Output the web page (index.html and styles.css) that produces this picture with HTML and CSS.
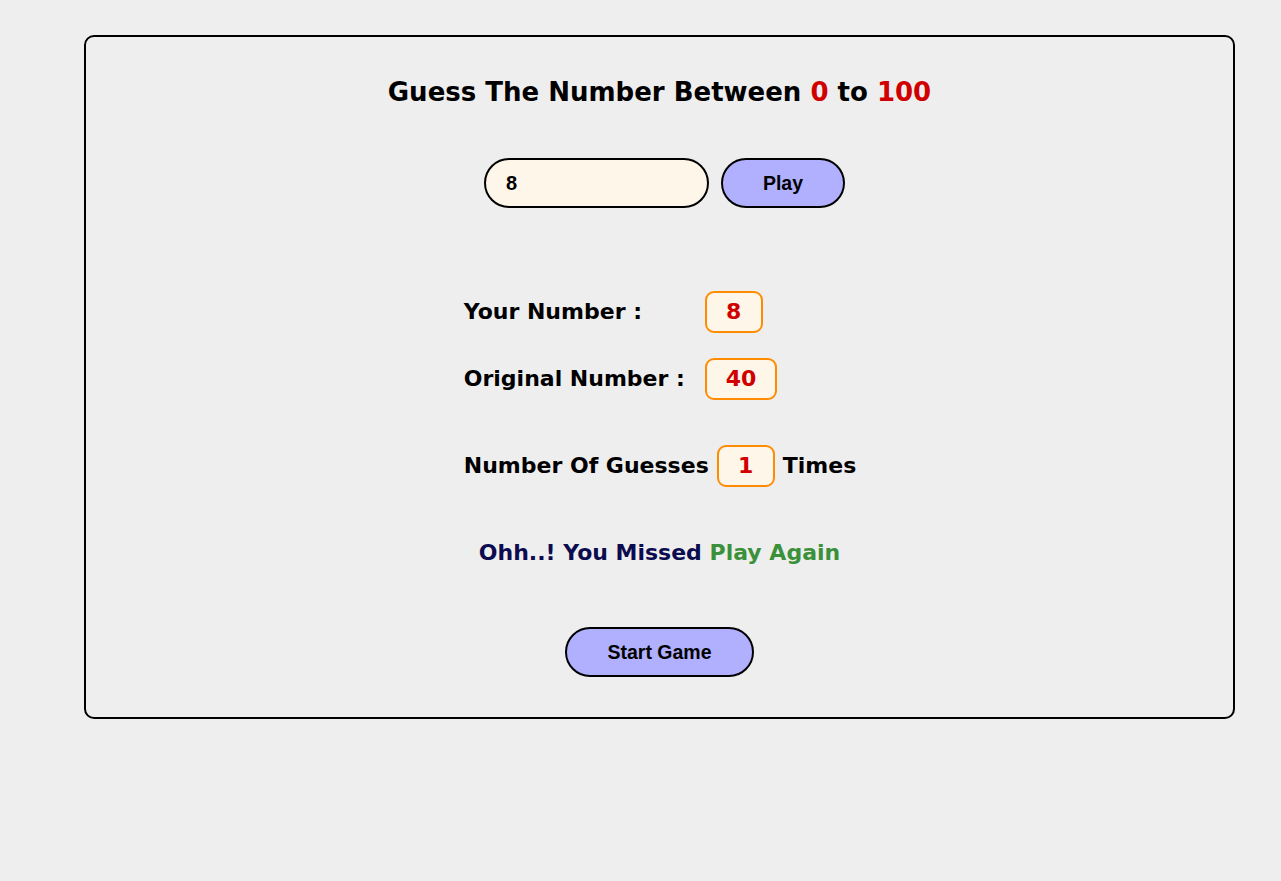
FILE: index.html
```html
<!DOCTYPE html>
<html lang="en">
<head>
<meta charset="utf-8">
<title>Guess The Number</title>
<link rel="stylesheet" href="styles.css">
</head>
<body>
<div class="card">
  <h1 class="title">Guess The Number Between <span class="red">0</span> to <span class="red">100</span></h1>
  <div class="form">
    <input class="guess" type="text" value="8">
    <button class="btn play">Play</button>
  </div>
  <div class="stats">
    <div class="row first">
      <span class="label">Your Number :</span>
      <span class="box">8</span>
    </div>
    <div class="row second">
      <span class="label">Original Number :</span>
      <span class="box">40</span>
    </div>
    <div class="row third">
      <span>Number Of Guesses</span>
      <span class="box">1</span>
      <span>Times</span>
    </div>
  </div>
  <p class="message"><span class="navy">Ohh..! You Missed</span> <span class="green">Play Again</span></p>
  <button class="btn start">Start Game</button>
</div>
</body>
</html>
```
FILE: styles.css
```css
html, body {
  margin: 0;
  padding: 0;
  background: #eeeeee;
}
body {
  padding: 35px 0 0 84px;
  font-family: "DejaVu Sans", Verdana, sans-serif;
  font-weight: bold;
  color: #000;
}
.card {
  box-sizing: border-box;
  width: 1151px;
  height: 684px;
  border: 2px solid #000;
  border-radius: 10px;
  display: flex;
  flex-direction: column;
  align-items: center;
  padding-top: 40px;
}
.title {
  margin: 0;
  font-size: 26px;
  line-height: 30px;
  font-weight: bold;
}
.red { color: #d10000; }
.form {
  display: flex;
  gap: 12px;
  margin-top: 51px;
  margin-left: 10px;
}
.guess {
  box-sizing: border-box;
  width: 225px;
  height: 50px;
  border: 2px solid #000;
  border-radius: 25px;
  background: #fff6ea;
  padding: 0 20px;
  font-family: "Liberation Sans", Arial, sans-serif;
  font-weight: bold;
  font-size: 20px;
  color: #000;
  outline: none;
}
.btn {
  box-sizing: border-box;
  height: 50px;
  border: 2px solid #000;
  border-radius: 25px;
  background: #b0b0ff;
  font-family: "Liberation Sans", Arial, sans-serif;
  font-weight: bold;
  font-size: 19.5px;
  color: #000;
  padding: 0;
}
.play { width: 124px; }
.stats {
  width: max-content;
  white-space: nowrap;
  margin-top: 83px;
  margin-left: 1px;
  display: flex;
  flex-direction: column;
  font-size: 22px;
  line-height: 26px;
}
.row {
  display: flex;
  align-items: center;
}
.second { margin-top: 25px; }
.third { margin-top: 45px; gap: 8px; }
.label { width: 241px; }
.box {
  box-sizing: border-box;
  height: 42px;
  padding: 0 19px;
  border: 2px solid #ff8c00;
  border-radius: 9px;
  background: #fff6ea;
  color: #d10000;
  display: flex;
  align-items: center;
  justify-content: center;
  min-width: 58px;
}
.message {
  margin: 51px 0 0;
  font-size: 22px;
  line-height: 30px;
}
.navy { color: #0b0b50; }
.green { color: #3a913a; }
.start {
  width: 189px;
  margin-top: 59px;
}
```
